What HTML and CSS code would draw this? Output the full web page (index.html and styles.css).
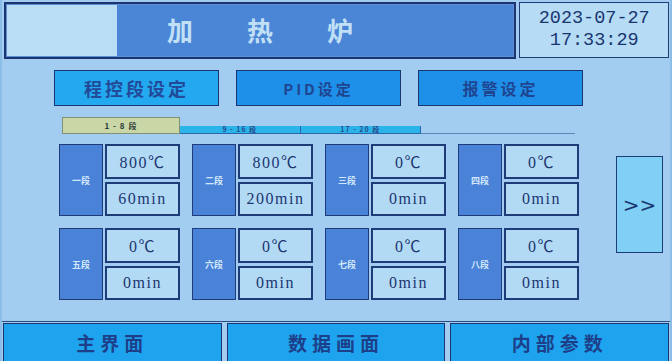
FILE: index.html
```html
<!DOCTYPE html>
<html lang="zh">
<head>
<meta charset="utf-8">
<title>加热炉</title>
<link rel="stylesheet" href="styles.css">
</head>
<body>
<div class="screen">
  <header class="header">
    <div class="titlebox">
      <div class="logo-pane"></div>
      <div class="title">加热炉</div>
    </div>
    <div class="datebox">
      <div>2023-07-27</div>
      <div>17:33:29</div>
    </div>
  </header>

  <main class="main">
    <div class="modes">
      <div class="mode mode-active">程控段设定</div>
      <div class="mode mode-pid">PID设定</div>
      <div class="mode mode-alarm">报警设定</div>
    </div>

    <div class="tabs">
      <div class="tab tab-active">1 - 8 段</div>
      <div class="band">
        <div class="band-seg">9 - 16 段</div>
        <div class="band-seg">17 - 20 段</div>
      </div>
      <div class="tab-line"></div>
    </div>

    <div class="content">
      <div class="grid">
        <div class="card"><div class="label">一段</div><div class="vals"><div class="val">800℃</div><div class="val">60min</div></div></div>
        <div class="card"><div class="label">二段</div><div class="vals"><div class="val">800℃</div><div class="val">200min</div></div></div>
        <div class="card"><div class="label">三段</div><div class="vals"><div class="val">0℃</div><div class="val">0min</div></div></div>
        <div class="card"><div class="label">四段</div><div class="vals"><div class="val">0℃</div><div class="val">0min</div></div></div>
        <div class="card"><div class="label">五段</div><div class="vals"><div class="val">0℃</div><div class="val">0min</div></div></div>
        <div class="card"><div class="label">六段</div><div class="vals"><div class="val">0℃</div><div class="val">0min</div></div></div>
        <div class="card"><div class="label">七段</div><div class="vals"><div class="val">0℃</div><div class="val">0min</div></div></div>
        <div class="card"><div class="label">八段</div><div class="vals"><div class="val">0℃</div><div class="val">0min</div></div></div>
      </div>
      <div class="next">&gt;&gt;</div>
    </div>
  </main>

  <nav class="footer">
    <div class="navbtn">主界面</div>
    <div class="navbtn">数据画面</div>
    <div class="navbtn">内部参数</div>
  </nav>
</div>
</body>
</html>
```

FILE: styles.css
```css
* { box-sizing: border-box; margin: 0; padding: 0; }

html, body {
  width: 672px;
  height: 361px;
  overflow: hidden;
  background: #a2cdf0;
  font-family: "Noto Sans CJK SC", "Noto Sans", sans-serif;
}

.screen {
  width: 672px;
  height: 361px;
  display: flex;
  flex-direction: column;
  background: #a2cdf0;
  border-left: 2px solid #8cbde6;
  border-right: 2px solid #8cbde6;
}

/* ---------- header ---------- */
.header {
  height: 59px;
  display: flex;
  gap: 3px;
  padding: 2px 1px 0 2px;
}

.titlebox {
  width: 514px;
  height: 57px;
  border: 2px solid #1c3470;
  padding: 1px;
  display: flex;
  background: #5d8fd6;
}

.logo-pane {
  width: 110px;
  background: #b9ddf3;
}

.title {
  flex: 1;
  background: #4a85d6;
  color: #c2e0f5;
  font-size: 26px;
  font-weight: 700;
  letter-spacing: 54px;
  line-height: 50px;
  padding-left: 50px;
}

.datebox {
  width: 150px;
  height: 56px;
  border: 1px solid #1e3c78;
  background: #b5dbf5;
  color: #1a3670;
  font-family: "Liberation Mono", monospace;
  font-size: 18.5px;
  line-height: 22px;
  text-align: center;
  padding-top: 5px;
}

/* ---------- main ---------- */
.main {
  flex: 1;
  padding: 11px 0 0 0;
  display: flex;
  flex-direction: column;
}

.modes {
  display: flex;
  gap: 17px;
  padding-left: 52px;
}

.mode {
  width: 165px;
  height: 36px;
  border: 1px solid #1c3470;
  background: #1e90ea;
  color: #1f4590;
  font-weight: 700;
  font-size: 16px;
  letter-spacing: 3px;
  display: flex;
  align-items: center;
  justify-content: center;
}

.mode-active {
  background: #22a9ef;
  font-size: 18px;
  color: #224a98;
}

.mode-pid { font-size: 15px; }

.tabs {
  margin-top: 11px;
  padding-left: 60px;
  display: flex;
  align-items: flex-end;
  height: 17px;
}

.tab {
  width: 118px;
  height: 17px;
  border: 1px solid #7f9278;
  background: #c9d6a6;
  color: #2a3a3a;
  font-size: 8px;
  font-weight: 700;
  letter-spacing: 1px;
  display: flex;
  align-items: center;
  justify-content: center;
}

.band {
  width: 241px;
  height: 8px;
  background: #2bb4ea;
  border-bottom: 1px solid #2a66a8;
  border-right: 1px solid #2a66a8;
  display: flex;
}

.band-seg {
  flex: 1;
  font-size: 7px;
  line-height: 7px;
  font-weight: 700;
  color: #2a4a8a;
  text-align: center;
  letter-spacing: 1px;
}

.band-seg + .band-seg { border-left: 1px solid #2a66a8; }

.tab-line {
  width: 154px;
  height: 1px;
  background: #5f86b8;
}

.content {
  display: flex;
  padding-left: 57px;
  margin-top: 10px;
}

.grid {
  display: grid;
  grid-template-columns: repeat(4, 121px);
  grid-auto-rows: 72px;
  column-gap: 12px;
  row-gap: 12px;
}

.card {
  display: flex;
  gap: 2px;
}

.label {
  width: 44px;
  background: #4a82d8;
  border: 1px solid #1e3c7a;
  color: #d2e8fa;
  font-size: 9px;
  font-weight: 700;
  display: flex;
  align-items: center;
  justify-content: center;
}

.vals {
  flex: 1;
  display: flex;
  flex-direction: column;
  gap: 3px;
}

.val {
  flex: 1;
  background: #b3daf5;
  border: 2px solid #1e3c78;
  color: #1a3670;
  font-family: "Liberation Serif", "Noto Sans CJK SC", serif;
  font-size: 16px;
  letter-spacing: 1.5px;
  display: flex;
  align-items: center;
  justify-content: center;
}

.next {
  margin-left: 37px;
  margin-top: 12px;
  width: 47px;
  height: 97px;
  background: #80cff4;
  border: 1px solid #1e3c78;
  color: #1a3670;
  font-family: "DejaVu Sans", sans-serif;
  font-size: 20px;
  display: flex;
  align-items: center;
  justify-content: center;
}

/* ---------- footer ---------- */
.footer {
  height: 40px;
  border-top: 1px solid #2a4a80;
  padding: 1px 1px 0 1px;
  display: flex;
  gap: 5px;
}

.navbtn {
  flex: 1;
  background: #1ea4ee;
  border: 1px solid #1c3470;
  border-bottom: none;
  color: #1d3f8a;
  font-size: 19px;
  font-weight: 700;
  letter-spacing: 5px;
  display: flex;
  align-items: center;
  justify-content: center;
}
```
